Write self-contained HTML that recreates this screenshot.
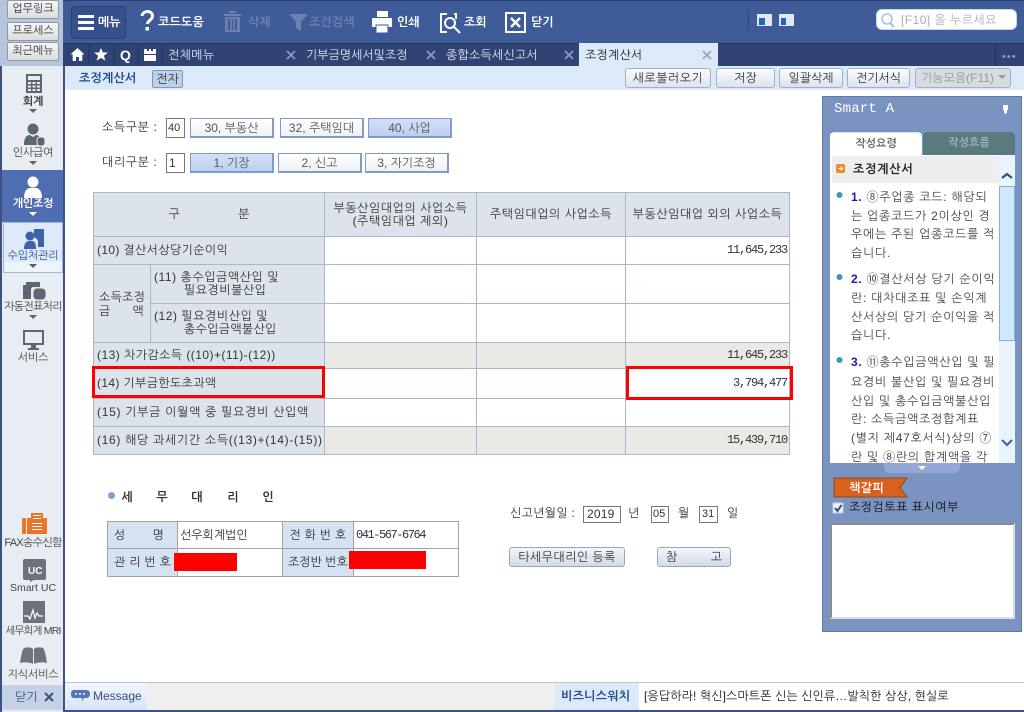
<!DOCTYPE html>
<html lang="ko"><head><meta charset="utf-8"><title>조정계산서</title>
<style>
*{box-sizing:border-box}
html,body{margin:0;padding:0;width:1024px;height:712px;overflow:hidden;background:#fff}
body{position:relative;font-family:"Liberation Sans","NanumGothic","Noto Sans CJK KR",sans-serif;font-size:12px;color:#333}
.r{position:absolute}
.t{position:absolute;white-space:pre;line-height:14px;font-style:normal;z-index:4}
.c{transform:translateX(-50%)}
.w{color:#fff;font-weight:bold}
.b{position:absolute;text-align:center;line-height:18px;white-space:pre}
.top{background:linear-gradient(#f6f6f6,#dcdcdc);border:1px solid #8d99ad;border-radius:2px;height:19px;left:7px;width:52px;line-height:17px;color:#333;font-size:11px}
.tb{background:linear-gradient(#fbfcfe,#dde3ec);border:1px solid #9fb0c8;border-radius:3px;top:68px;height:20px;color:#333}
.op{border:1px solid #7f9bcb;border-bottom:2px solid #7f9bcb;border-right:2px solid #7f9bcb;background:linear-gradient(#fff,#eef1f6);height:20px;color:#555}
.on{background:linear-gradient(#d4e0f8,#bccff0)}
.inp{position:absolute;border:1px solid #777;background:#fff;line-height:16px;padding-left:2px;height:19px}
.gb{background:linear-gradient(#f3f6fa,#d3dbe8);border:1px solid #93a6c6;border-radius:3px;height:20px}
table{border-collapse:collapse;table-layout:fixed;position:absolute}
#m td{border:1px solid #aab6cc;padding:0 2px;line-height:13px;white-space:pre}
#m .h{background:#dce3ea}
#m .g{background:#e9e9e5}
#m .n{text-align:right;padding-right:2px;font-family:"Liberation Mono",monospace;font-size:12px;letter-spacing:-1.2px}
#m .l{padding-left:3px}
#a td{border:1px solid #a3a3a3;white-space:pre;padding:0}
#a .h{background:#d5e2f2}
.s{color:#444;font-size:11px;letter-spacing:-.2px}
.p{letter-spacing:.72px;color:#444}
</style></head><body>

<!-- left sidebar -->
<div class="r" style="left:0;top:0;width:65px;height:712px;background:#e8ecf3;border-left:2px solid #3d5184;border-right:2px solid #3d5184"></div>
<div class="r" style="left:0;top:0;width:63px;height:66px;background:#b5c5dc"></div>
<div class="b top" style="top:0">업무링크</div>
<div class="b top" style="top:22px">프로세스</div>
<div class="b top" style="top:42px">최근메뉴</div>

<!-- top bars -->
<div class="r" style="left:63px;top:0;width:961px;height:43px;background:#3f5c98;border-top:1px solid #2d4272"></div>
<div class="r" style="left:63px;top:43px;width:961px;height:23px;background:#2f4474;border-top:1px solid #26385f"></div>
<div class="r" style="left:65px;top:66px;width:959px;height:24px;background:#dce9f9"></div>
<div class="r" style="left:71px;top:6px;width:55px;height:33px;background:#35508a;border:1px solid #2b4173;border-radius:4px"></div>
<div class="r" style="left:579px;top:43px;width:139px;height:24px;background:#dce9f9"></div>
<div class="r" style="left:748px;top:10px;width:1px;height:20px;background:#2f4679"></div>
<div class="r" style="left:995px;top:44px;width:1px;height:22px;background:#223358"></div>

<i class="t w" style="left:98px;top:15px">메뉴</i>
<i class="t w" style="left:158px;top:15px;letter-spacing:.2px">코드도움</i>
<i class="t" style="left:248px;top:15px;color:#6b80ae;font-weight:bold">삭제</i>
<i class="t" style="left:309px;top:15px;color:#6b80ae;font-weight:bold;letter-spacing:.1px">조건검색</i>
<i class="t w" style="left:397px;top:15px">인쇄</i>
<i class="t w" style="left:464px;top:15px">조회</i>
<i class="t w" style="left:531px;top:15px">닫기</i>

<div class="r" style="left:876px;top:9px;width:141px;height:21px;background:#fff;border-radius:6px;border:1px solid #c9d4e6"></div>
<i class="t" style="left:901px;top:13px;color:#a9aeb8;letter-spacing:.45px">[F10] 을 누르세요</i>

<i class="t" style="left:168px;top:48px;color:#dfe5f0;letter-spacing:.3px">전체메뉴</i>
<i class="t" style="left:306px;top:48px;color:#dfe5f0">기부금명세서및조정</i>
<i class="t" style="left:446px;top:48px;color:#dfe5f0;letter-spacing:.2px">종합소득세신고서</i>
<i class="t" style="left:585px;top:48px;color:#222;letter-spacing:.2px">조정계산서</i>
<i class="t" style="left:1002px;top:50px;color:#8899bb;font-size:11px;letter-spacing:1px">•••</i>

<i class="t" style="left:79px;top:71px;color:#1c4a92;font-weight:bold;letter-spacing:.2px">조정계산서</i>
<div class="b" style="left:152px;top:70px;width:31px;height:18px;background:#bcd0ea;border:1px solid #7e99c5;border-radius:2px;line-height:16px;color:#333">전자</div>

<div class="b tb" style="left:625px;width:86px;letter-spacing:.5px">새로불러오기</div>
<div class="b tb" style="left:716px;width:59px">저장</div>
<div class="b tb" style="left:779px;width:64px">일괄삭제</div>
<div class="b tb" style="left:847px;width:63px">전기서식</div>
<div class="b tb" style="left:915px;width:96px;background:#d8dbe0;color:#999;text-align:left;padding-left:5px">기능모음(F11)</div>

<!-- sidebar labels -->
<div class="r" style="left:2px;top:170px;width:61px;height:52px;background:#4f6db0"></div>
<div class="r" style="left:3px;top:222px;width:60px;height:51px;background:linear-gradient(#dde8f8 0 80%,#eef4fc 80%);border:1px solid #9db6df"></div>
<div class="r" style="left:2px;top:685px;width:61px;height:25px;background:#c5d2e5"></div>
<i class="t c s" style="left:33px;top:95px;color:#333;font-weight:bold">회계</i>
<i class="t c s" style="left:33px;top:146px">인사급여</i>
<i class="t c s" style="left:33px;top:197px;color:#fff;font-weight:bold">개인조정</i>
<i class="t c s" style="left:33px;top:249px;color:#2c55a0">수입처관리</i>
<i class="t c s" style="left:33px;top:300px;letter-spacing:-.7px">자동전표처리</i>
<i class="t c s" style="left:33px;top:351px">서비스</i>
<i class="t c s" style="left:33px;top:536px;letter-spacing:-.7px">FAX송수신함</i>
<i class="t c s" style="left:33px;top:581px;font-size:10.5px;letter-spacing:0">Smart UC</i>
<i class="t c s" style="left:33px;top:624px;letter-spacing:-.8px;font-size:10.5px">세무회계 MRI</i>
<i class="t c s" style="left:33px;top:668px">지식서비스</i>
<i class="t" style="left:15px;top:690px;color:#34527f">닫기</i>

<!-- form -->
<i class="t" style="left:102px;top:120px;letter-spacing:.6px">소득구분 :</i>
<div class="inp" style="left:166px;top:118px;width:19px;height:20px;line-height:18px;padding-left:1px;font-size:11px">40</div>
<div class="b op" style="left:190px;top:118px;width:84px">30, 부동산</div>
<div class="b op" style="left:280px;top:118px;width:84px">32, 주택임대</div>
<div class="b op on" style="left:368px;top:118px;width:84px">40, 사업</div>
<i class="t" style="left:102px;top:155px;letter-spacing:.6px">대리구분 :</i>
<div class="inp" style="left:166px;top:153px;width:19px;height:20px;line-height:18px">1</div>
<div class="b op on" style="left:190px;top:153px;width:84px">1, 기장</div>
<div class="b op" style="left:278px;top:153px;width:84px">2, 신고</div>
<div class="b op" style="left:365px;top:153px;width:84px">3, 자기조정</div>

<!-- main table -->
<table id="m" style="left:93px;top:192px;width:696px">
<colgroup><col style="width:57px"><col style="width:174px"><col style="width:152px"><col style="width:149px"><col style="width:164px"></colgroup>
<tr style="height:44px"><td class="h" colspan="2" style="text-align:center;word-spacing:55px">구 분</td><td class="h" style="text-align:center;letter-spacing:.55px">부동산임대업의 사업소득
(주택임대업 제외)</td><td class="h" style="text-align:center;letter-spacing:.55px">주택임대업의 사업소득</td><td class="h" style="text-align:center;letter-spacing:.55px">부동산임대업 외의 사업소득</td></tr>
<tr style="height:28px"><td class="h l" colspan="2" style="letter-spacing:.35px">(10) 결산서상당기순이익</td><td></td><td></td><td class="n">11,645,233</td></tr>
<tr style="height:39px"><td class="h" rowspan="2" style="padding-left:5px;padding-right:5px;line-height:14px;letter-spacing:.3px">소득조정
<span style="display:flex;justify-content:space-between;padding-right:1px"><span>금</span><span>액</span></span></td><td class="h l" style="letter-spacing:.55px">(11) 총수입금액산입 및
<span style="padding-left:30px;letter-spacing:.5px">필요경비불산입</span></td><td></td><td></td><td></td></tr>
<tr style="height:39px"><td class="h l" style="letter-spacing:.55px">(12) 필요경비산입 및
<span style="padding-left:30px;letter-spacing:.3px">총수입금액불산입</span></td><td></td><td></td><td></td></tr>
<tr style="height:26px"><td class="h l" colspan="2" style="letter-spacing:.45px">(13) 차가감소득 ((10)+(11)-(12))</td><td class="g"></td><td class="g"></td><td class="g n">11,645,233</td></tr>
<tr style="height:30px"><td class="h l" colspan="2" style="letter-spacing:.35px">(14) 기부금한도초과액</td><td></td><td></td><td class="n">3,794,477</td></tr>
<tr style="height:28px"><td class="h l" colspan="2" style="letter-spacing:.7px">(15) 기부금 이월액 중 필요경비 산입액</td><td></td><td></td><td></td></tr>
<tr style="height:28px"><td class="h l" colspan="2" style="letter-spacing:.68px">(16) 해당 과세기간 소득((13)+(14)-(15))</td><td class="g"></td><td class="g"></td><td class="g n">15,439,710</td></tr>
</table>
<div class="r" style="left:92px;top:366px;width:233px;height:32px;border:3px solid #f00"></div>
<div class="r" style="left:626px;top:366px;width:167px;height:34px;border:3px solid #f00"></div>

<!-- agent -->
<div class="r" style="left:108px;top:492px;width:7px;height:7px;border-radius:50%;background:#7ba0d8"></div>
<i class="t c" style="left:127px;top:490px;font-weight:bold">세</i>
<i class="t c" style="left:162px;top:490px;font-weight:bold">무</i>
<i class="t c" style="left:197px;top:490px;font-weight:bold">대</i>
<i class="t c" style="left:233px;top:490px;font-weight:bold">리</i>
<i class="t c" style="left:268px;top:490px;font-weight:bold">인</i>
<table id="a" style="left:107px;top:521px;width:351px">
<colgroup><col style="width:70px"><col style="width:105px"><col style="width:71px"><col style="width:105px"></colgroup>
<tr style="height:27px"><td class="h" style="padding-left:6px;word-spacing:24px">성 명</td><td style="padding-left:2px">선우회계법인</td><td class="h" style="text-align:center;letter-spacing:.3px">전 화 번 호</td><td style="padding-left:2px;font-family:'Liberation Mono',monospace;font-size:12px;letter-spacing:-1.45px">041-567-6764</td></tr>
<tr style="height:28px"><td class="h" style="padding-left:6px;letter-spacing:.3px">관 리 번 호</td><td></td><td class="h" style="padding-left:5px">조정반 번호</td><td></td></tr>
</table>
<div class="r" style="left:174px;top:553px;width:63px;height:18px;background:#f00"></div>
<div class="r" style="left:349px;top:551px;width:77px;height:18px;background:#f00"></div>

<i class="t" style="left:510px;top:506px;letter-spacing:.3px">신고년월일 :</i>
<div class="inp" style="left:583px;top:506px;width:38px;height:17px;line-height:15px;padding-left:3px;letter-spacing:.2px">2019</div>
<i class="t" style="left:628px;top:506px">년</i>
<div class="inp" style="left:651px;top:506px;width:18px;height:17px;line-height:15px;padding-left:1px;font-size:11px">05</div>
<i class="t" style="left:678px;top:506px">월</i>
<div class="inp" style="left:699px;top:506px;width:19px;height:17px;line-height:15px;padding-left:2px;font-size:11px">31</div>
<i class="t" style="left:727px;top:506px">일</i>
<div class="b gb" style="left:509px;top:547px;width:116px;letter-spacing:.45px">타세무대리인 등록</div>
<div class="b gb" style="left:657px;top:547px;width:74px;word-spacing:30px">참 고</div>

<!-- right panel -->
<div class="r" style="left:822px;top:96px;width:200px;height:536px;background:#7a93c0;border:1px solid #5f7aa8"></div>
<i class="t" style="left:834px;top:102px;color:#fff;font-family:'Liberation Mono',monospace;font-size:14px;letter-spacing:.2px">Smart A</i>
<div class="b" style="left:830px;top:132px;width:92px;height:23px;background:#fff;border-radius:4px 4px 0 0;border-top:1px solid #dde;line-height:22px;font-weight:bold;font-size:11px;color:#666">작성요령</div>
<div class="b" style="left:923px;top:132px;width:92px;height:23px;background:#5b7a80;border-radius:4px 4px 0 0;line-height:22px;font-weight:bold;font-size:11px;color:#9fb6bc">작성흐름</div>
<div class="r" style="left:830px;top:155px;width:185px;height:308px;background:#fff"></div>
<div class="r" style="left:832px;top:156px;width:167px;height:27px;background:#eeeeee"></div>
<div class="r" style="left:999px;top:155px;width:16px;height:308px;background:#e8f3fb"></div>
<div class="r" style="left:999px;top:186px;width:16px;height:155px;background:#cfe8fb;border:1px solid #84ade0"></div>
<i class="t" style="left:853px;top:162px;font-weight:bold;color:#222;letter-spacing:.8px">조정계산서</i>

<i class="t p" style="left:851px;top:190px"><b style="color:#1a1ab8">1.</b> ⑧주업종 코드: 해당되</i>
<i class="t p" style="left:851px;top:209px">는 업종코드가 2이상인 경</i>
<i class="t p" style="left:851px;top:227px">우에는 주된 업종코드를 적</i>
<i class="t p" style="left:851px;top:246px">습니다.</i>
<i class="t p" style="left:851px;top:272px"><b style="color:#1a1ab8">2.</b> ⑩결산서상 당기 순이익</i>
<i class="t p" style="left:851px;top:291px">란: 대차대조표 및 손익계</i>
<i class="t p" style="left:851px;top:310px">산서상의 당기 순이익을 적</i>
<i class="t p" style="left:851px;top:328px">습니다.</i>
<i class="t p" style="left:851px;top:355px"><b style="color:#1a1ab8">3.</b> ⑪총수입금액산입 및 필</i>
<i class="t p" style="left:851px;top:375px">요경비 불산입 및 필요경비</i>
<i class="t p" style="left:851px;top:394px">산입 및 총수입금액불산입</i>
<i class="t p" style="left:851px;top:412px">란: 소득금액조정합계표</i>
<i class="t p" style="left:851px;top:431px">(별지 제47호서식)상의 ⑦</i>
<i class="t p" style="left:851px;top:450px;height:13px;overflow:hidden">란 및 ⑧란의 합계액을 각</i>
<div class="r" style="left:884px;top:463px;width:76px;height:10px;background:#94a8d6;border-radius:0 0 6px 6px"></div>
<i class="t" style="left:849px;top:481px;color:#fff;font-weight:bold;letter-spacing:.5px">책갈피</i>
<i class="t" style="left:849px;top:500px;color:#111;letter-spacing:.5px">조정검토표 표시여부</i>
<div class="r" style="left:830px;top:523px;width:185px;height:96px;background:#fff;border:2px solid #8c8c8c;border-right-color:#ddd;border-bottom-color:#ddd"></div>

<!-- bottom bar -->
<div class="r" style="left:65px;top:682px;width:959px;height:28px;background:#efefef;border-top:1px solid #bfc4cc"></div>
<div class="r" style="left:66px;top:683px;width:81px;height:27px;background:linear-gradient(#f3f7fd,#d5e3f6)"></div>
<div class="r" style="left:555px;top:683px;width:84px;height:27px;background:#dce9f9"></div>
<div class="r" style="left:639px;top:683px;width:385px;height:27px;background:#fff"></div>
<div class="r" style="left:65px;top:710px;width:959px;height:2px;background:#3d5184"></div>
<i class="t" style="left:93px;top:689px;color:#38507f;letter-spacing:0">Message</i>
<i class="t" style="left:561px;top:689px;color:#204a8c;font-weight:bold;letter-spacing:.3px">비즈니스워치</i>
<i class="t" style="left:644px;top:689px;color:#222;letter-spacing:.1px">[응답하라! 혁신]스마트폰 신는 신인류…발칙한 상상, 현실로</i>

<!-- icons -->
<svg class="r" style="left:0;top:0;z-index:3" width="1024" height="712" viewBox="0 0 1024 712">
<!-- toolbar -->
<g fill="#fff"><rect x="78" y="15" width="16" height="3"/><rect x="78" y="21" width="16" height="3"/><rect x="78" y="27" width="16" height="3"/></g>
<path d="M143 16c.5-3 3-4.500 5.500-4.500 3 0 5 2 5 4.500 0 4-5 4.500-5 8" fill="none" stroke="#fff" stroke-width="3" transform="translate(-1 0)"/><rect x="145.500" y="27" width="3.500" height="3.500" fill="#fff"/>
<g fill="#6b80ae"><rect x="224" y="14" width="17" height="2"/><rect x="229" y="11" width="7" height="2"/><path d="M225 17h15v15h-15zM228 19v11h2v-11zM231.800 19v11h1.500v-11zM235 19v11h2v-11z" fill-rule="evenodd"/></g>
<path d="M289 14h19l-7 8v9l-5-3v-6z" fill="#6b80ae"/>
<g fill="#fff"><rect x="378" y="11" width="9" height="1"/><rect x="377" y="11" width="11" height="6"/><rect x="372" y="18" width="20" height="9" rx="1"/><rect x="376" y="25" width="12" height="8" stroke="#3f5c98"/></g>
<g fill="none" stroke="#fff" stroke-width="2"><path d="M447 14h-6v18h6M454 14h2v5"/><circle cx="450" cy="23" r="5"/><path d="M454 27l6 6"/></g>
<rect x="506" y="13" width="19" height="19" fill="none" stroke="#fff" stroke-width="2"/><path d="M511 18l9 9M520 18l-9 9" stroke="#fff" stroke-width="2.300"/>
<g><rect x="757" y="14" width="15" height="12" fill="#e4e8ee"/><rect x="759" y="18" width="6" height="7" fill="#1e66c0"/><rect x="779" y="14" width="15" height="12" fill="#e4e8ee"/><rect x="781" y="18" width="5" height="7" fill="#1e66c0"/></g>
<circle cx="887" cy="19" r="5" fill="none" stroke="#a8bfe0" stroke-width="1.500"/><path d="M890 23l4 4" stroke="#a8bfe0" stroke-width="2"/>
<!-- tabs -->
<g stroke="#22345c"><path d="M89 44v22M114 44v22M138 44v22M162 44v22"/></g>
<path d="M77.500 48l-7 6.500h2.200v6.500h3.300v-4h3v4h3.300v-6.500h2.200z" fill="#fff"/>
<path d="M101 48l1.900 4.500h5l-4 3.300 1.500 5-4.400-2.900-4.400 2.900 1.500-5-4-3.300h5z" fill="#fff"/>
<text x="120" y="60" fill="#fff" font-family="Liberation Sans" font-weight="bold" font-size="14">Q</text>
<path d="M144 49h3v2h2v-2h2v2h2v-2h3v5h-12zM144 55h12v6h-12z" fill="#fff"/>
<g stroke="#8d9bb8" stroke-width="1.800"><path d="M287 51l8 8M295 51l-8 8M427 51l8 8M435 51l-8 8M565 51l8 8M573 51l-8 8"/></g>
<path d="M703 51l8 8M711 51l-8 8" stroke="#9aa6bd" stroke-width="1.800"/>
<path d="M998 75h8l-4 4z" fill="#999"/>
<!-- sidebar -->
<g fill="#5f6673"><path d="M26 74h16v19h-16zM28 76v4h12v-4zM28 82v2h3v-2zM32.500 82v2h3v-2zM37 82v2h3v-2zM28 85.500v2h3v-2zM32.500 85.500v2h3v-2zM37 85.500v2h3v-2zM28 89v2h3v-2zM32.500 89v2h3v-2zM37 89v2h3v-2z" fill-rule="evenodd"/>
<path d="M29 109h8l-4 4zM29 161h8l-4 4z"/>
<circle cx="33" cy="129" r="5.500"/><path d="M24 145c0-8 3-10 6-10l3 2 3-2c2 0 3 1 4 3v7z"/><rect x="37" y="137" width="8" height="9" rx="3" stroke="#e8ecf3"/>
<path d="M29 315h8l-4 4z"/>
<path d="M23 285h3v-3h14v5h-6c-2 0-3 1-3 3v9h-8z"/><rect x="33" y="288" width="13" height="12" rx="4" stroke="#e8ecf3"/>
<path d="M23 330h21v15h-8v3h3v2h-11v-2h3v-3h-8zM25 332v11h17v-11z" fill-rule="evenodd"/>
</g>
<path d="M29 212h8l-4 4z" fill="#fff"/>
<circle cx="33" cy="182" r="5.500" fill="#fff"/><path d="M24 198c0-7 3-10 6-10h6c3 0 6 3 6 10z" fill="#fff"/>
<g fill="#3c62a8"><circle cx="30" cy="236" r="4.500"/><path d="M24 249c0-5 2-8 5-8h3c3 0 4 3 4 8z"/><path d="M34 229h10v18h-6v-6c0-1-2-3-4-4z"/></g>
<path d="M29 264h8l-4 4z" fill="#555e70"/>
<g fill="#e8752a"><rect x="22" y="518" width="4" height="16" rx="1"/><path d="M27 518h4v-5h12v5h4v16h-20z"/></g>
<g fill="#fff"><rect x="33" y="515" width="8" height="1"/><rect x="33" y="518" width="8" height="1"/><rect x="32" y="523" width="10" height="1"/><rect x="32" y="526" width="10" height="1"/><rect x="32" y="529" width="10" height="1"/></g>
<path d="M25 559h19a2 2 0 0 1 2 2v17a2 2 0 0 1-2 2h-10l-4 2v-2h-5a2 2 0 0 1-2-2v-17a2 2 0 0 1 2-2z" fill="#6d737e"/>
<text x="28" y="574" fill="#fff" font-family="Liberation Sans" font-size="10" font-weight="bold">UC</text>
<rect x="23" y="601" width="22" height="22" fill="#6d737e"/><path d="M24 616l4 0 2 3 3-9 2 8 2-5 2 3 4 0" fill="none" stroke="#fff" stroke-width="1.200"/>
<path d="M20 663c1-6 2-13 4-15 3-1 7-1 9 1v15c-3-2-9-2-13-1zM47 663c-1-6-2-13-4-15-3-1-7-1-9 1v15c3-2 9-2 13-1z" fill="#6d737e"/>
<path d="M45 693l8 8M53 693l-8 8" stroke="#34527f" stroke-width="2"/>
<!-- message -->
<path d="M74 690h12c2 0 4 1 4 4s-2 4-4 4h-2l-2 3v-3h-8c-2 0-3-1-3-4s1-4 3-4z" fill="#5078b5"/>
<g fill="#fff"><circle cx="76" cy="694" r="1"/><circle cx="80" cy="694" r="1"/><circle cx="84" cy="694" r="1"/></g>
<!-- panel -->
<path d="M1003 105h5v5h-1v3h-1l-.5 2-.5-2h-1v-3h-1z" fill="#fff"/>
<rect x="836" y="164" width="9" height="9" rx="2" fill="#ee8a2a"/><path d="M838 168.500h4M840.500 166.500l2 2-2 2" stroke="#fff" fill="none"/>
<path d="M1002 178l5-4 5 4" fill="none" stroke="#2e4e84" stroke-width="2.200"/>
<path d="M1002 440l5 5 5-5" fill="none" stroke="#3a66a8" stroke-width="2.200"/>
<g fill="#3e95c0"><circle cx="839.500" cy="195" r="3"/><circle cx="839.500" cy="277" r="3"/><circle cx="839.500" cy="360" r="3"/></g>
<path d="M918 466h8l-4 4z" fill="#fff"/>
<path d="M834 478h73l-7 9.500 7 9.500h-73z" fill="#d9611f" stroke="#8a4a18"/>
<rect x="833" y="503" width="10" height="10" fill="#eef1f8" stroke="#c4cee0"/><path d="M835 508l2.500 3 4-6" fill="none" stroke="#2e4a8e" stroke-width="2"/>
</svg>
</body></html>
